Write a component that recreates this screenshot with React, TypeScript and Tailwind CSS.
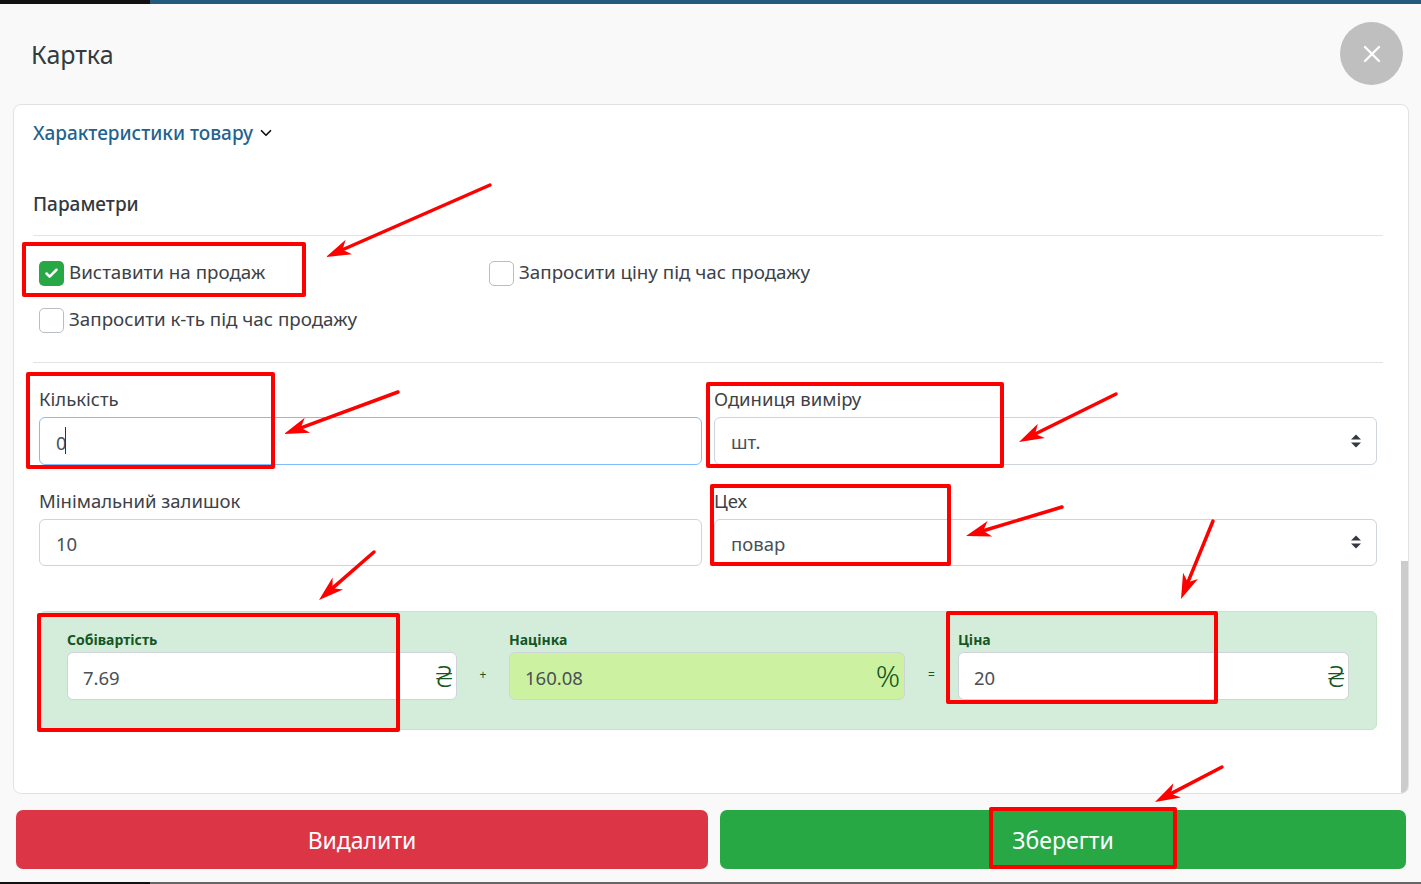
import { Check, ChevronDown, X } from "lucide-react"

const boxes = [
  "left-[22px] top-[242px] w-[284px] h-[55px]",
  "left-[26px] top-[372px] w-[249px] h-[97px]",
  "left-[706px] top-[382px] w-[298px] h-[86px]",
  "left-[710px] top-[484px] w-[241px] h-[82px]",
  "left-[37px] top-[613px] w-[363px] h-[119px]",
  "left-[946px] top-[611px] w-[272px] h-[93px]",
  "left-[989px] top-[807px] w-[188px] h-[62px]",
]

const arrows = [
  [490, 185, 326, 257],
  [398, 392, 284, 434],
  [1116, 394, 1019, 442],
  [1062, 507, 966, 536],
  [374, 552, 319, 600],
  [1213, 521, 1181, 599],
  [1222, 767, 1155, 802],
]

function Arrow({ from }: { from: number[] }) {
  const [x1, y1, x2, y2] = from
  const len = Math.hypot(x2 - x1, y2 - y1)
  const ux = (x2 - x1) / len
  const uy = (y2 - y1) / len
  const bx = x2 - ux * 25
  const by = y2 - uy * 25
  const nx = -uy * 8
  const ny = ux * 8
  const nk = x2 - ux * 18
  const mk = y2 - uy * 18
  return (
    <g fill="#ff0000" stroke="#ff0000">
      <line x1={x1} y1={y1} x2={nk} y2={mk} strokeWidth={3.5} strokeLinecap="round" />
      <polygon strokeWidth={0} points={`${x2},${y2} ${bx + nx},${by + ny} ${nk},${mk} ${bx - nx},${by - ny}`} />
    </g>
  )
}

function Annotations() {
  return (
    <>
      {boxes.map((b) => (
        <div key={b} className={`absolute ${b} border-[4px] border-[#ff0000] rounded-[2px] pointer-events-none`} />
      ))}
      <svg className="absolute left-0 top-0 pointer-events-none" width={1421} height={884}>
        {arrows.map((a) => (
          <Arrow key={a.join()} from={a} />
        ))}
      </svg>
    </>
  )
}

function CheckRow({ label, checked, className }: { label: string; checked?: boolean; className?: string }) {
  return (
    <div className={`flex items-center h-[25px] gap-[5px] text-[18.8px] text-[#3c4147] ${className ?? ""}`}>
      {checked ? (
        <span className="w-[25px] h-[25px] rounded-[5px] bg-[#28a745] flex items-center justify-center">
          <Check className="w-[15px] h-[15px] text-white" strokeWidth={4} />
        </span>
      ) : (
        <span className="w-[25px] h-[25px] rounded-[5px] bg-white border border-[#b9bec4]" />
      )}
      <span className="pb-[2px]">{label}</span>
    </div>
  )
}

function SelectField({ label, value, className }: { label: string; value: string; className?: string }) {
  return (
    <div className={className}>
      <div className="h-[34px] pb-[2px] flex items-center text-[18.5px] text-[#3c4147]">{label}</div>
      <div className="h-[47.5px] rounded-[6px] border border-[#ced4da] bg-white flex items-center justify-between pl-[16px] pr-[14px] text-[18.5px] text-[#495057]">
        <span className="pt-[3px]">{value}</span>
        <svg width="12" height="14" viewBox="0 0 12 14">
          <path d="M6 0.5 L11 5.5 H1 Z M6 13.5 L1 8.5 H11 Z" fill="#343a40" />
        </svg>
      </div>
    </div>
  )
}

function InputField({ label, value, focused, className }: { label: string; value: string; focused?: boolean; className?: string }) {
  return (
    <div className={className}>
      <div className="h-[34px] pb-[2px] flex items-center text-[18.5px] text-[#3c4147]">{label}</div>
      <div className="relative">
        <input
          readOnly
          value={value}
          className={`w-full h-[47.5px] rounded-[6px] border bg-white pl-[16px] pt-[3px] text-[18.5px] text-[#495057] outline-none ${focused ? "border-[#80bdff]" : "border-[#ced4da]"}`}
        />
        {focused && <span className="absolute left-[26px] top-[10px] w-px h-[27px] bg-[#333]" />}
      </div>
    </div>
  )
}

function PriceField({ label, value, unit, tint, className }: { label: string; value: string; unit: string; tint?: boolean; className?: string }) {
  return (
    <div className={className}>
      <div className="h-[25px] flex items-center text-[14px] font-bold text-[#155724]">{label}</div>
      <div className={`h-[48px] rounded-[6px] border border-[#ced4da] flex items-center justify-between pl-[15px] pr-[4px] ${tint ? "bg-[#ccf2a1]" : "bg-white"}`}>
        <span className="pt-[3px] text-[18.5px] text-[#495057]">{value}</span>
        <span className="text-[30px] font-light text-[#155724] leading-none">{unit}</span>
      </div>
    </div>
  )
}

export default function App() {
  return (
    <div className="relative w-[1421px] h-[884px] overflow-hidden bg-[#f9f9f9] font-['Noto_Sans','Open_Sans',sans-serif]">
      {/* Top strip */}
      <div className="flex h-[4px]">
        <div className="w-[150px] bg-[#111111]" />
        <div className="flex-1 bg-[#235a80]" />
      </div>

      {/* Header */}
      <div className="h-[100px] pl-[31px] pr-[18px] flex justify-between">
        <h1 className="mt-[34px] h-[34px] flex items-center text-[25px] text-[#333a40]">Картка</h1>
        <button className="mt-[18px] w-[63px] h-[63px] rounded-full bg-[#bfbfbf] flex items-center justify-center">
          <X className="w-[28px] h-[28px] text-white" strokeWidth={2} />
        </button>
      </div>

      {/* Card */}
      <div className="relative mx-[13px] w-[1396px] h-[690px] rounded-[8px] border border-[#e2e2e2] bg-white overflow-hidden">
        <div className="absolute right-0 top-[456px] bottom-0 w-[7px] bg-[#cccccc]" />
        <div className="pl-[19px] pr-[25px]">
          <div className="h-[58px] pb-[2px] flex items-center gap-[4px] text-[19px] font-medium text-[#1f6391]">
            Характеристики товару
            <ChevronDown className="w-[18px] h-[18px] text-[#111]" strokeWidth={2.25} />
          </div>
          <div className="h-[72px] pt-[10px] flex items-center text-[19px] font-medium text-[#33383d]">Параметри</div>
          <div className="h-[128px] border-y border-[#e4e4e4] pl-[6px] pt-[25px]">
            <div className="flex">
              <CheckRow label="Виставити на продаж" checked className="w-[450px]" />
              <CheckRow label="Запросити ціну під час продажу" />
            </div>
            <CheckRow label="Запросити к-ть під час продажу" className="mt-[22px]" />
          </div>
        </div>

        <div className="pl-[25px] pr-[31px] pt-[20px]">
          <div className="grid grid-cols-2 gap-x-[12px] gap-y-[20px]">
            <InputField label="Кількість" value="0" focused />
            <SelectField label="Одиниця виміру" value="шт." />
            <InputField label="Мінімальний залишок" value="10" />
            <SelectField label="Цех" value="повар" />
          </div>

          <div className="mt-[45px] h-[119px] rounded-[6px] border border-[#c3e6cb] bg-[#d4edda] pl-[27px] pr-[27px] pt-[15px] flex">
            <PriceField label="Собівартість" value="7.69" unit="₴" className="w-[390px]" />
            <div className="w-[52px] pt-[39px] text-center text-[12px] text-[#155724]">+</div>
            <PriceField label="Націнка" value="160.08" unit="%" tint className="w-[396px]" />
            <div className="w-[53px] pt-[39px] text-center text-[12px] text-[#155724]">=</div>
            <PriceField label="Ціна" value="20" unit="₴" className="w-[391px]" />
          </div>
        </div>
      </div>

      {/* Footer buttons */}
      <div className="mt-[16px] pl-[16px] flex gap-[12px]">
        <button className="w-[692px] h-[59px] pt-[2px] rounded-[7px] bg-[#dc3545] text-white text-[23px]">Видалити</button>
        <button className="w-[686px] h-[59px] pt-[2px] rounded-[7px] bg-[#28a745] text-white text-[23px]">Зберегти</button>
      </div>

      {/* Bottom strip */}
      <div className="absolute left-0 right-0 bottom-0 flex h-[2px]">
        <div className="w-[150px] bg-[#111111]" />
        <div className="flex-1 bg-[#666666]" />
      </div>

      <Annotations />
    </div>
  )
}
